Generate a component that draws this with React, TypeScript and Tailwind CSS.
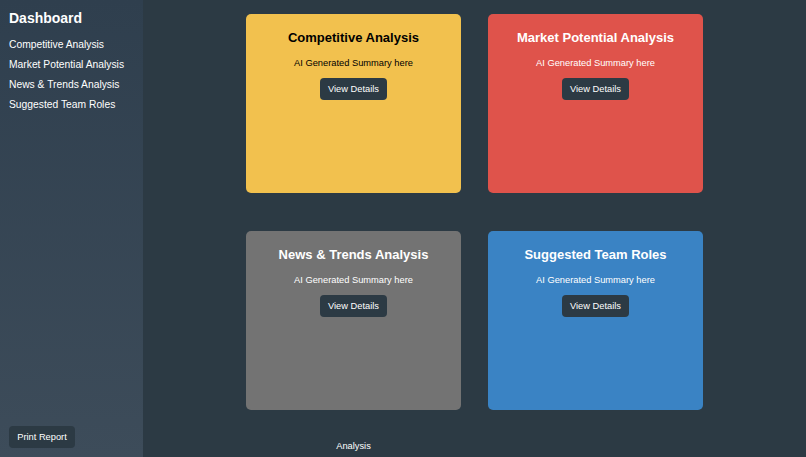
const cards = [
  { title: "Competitive Analysis", bg: "bg-[#f2c14e]", text: "text-black" },
  { title: "Market Potential Analysis", bg: "bg-[#df534b]", text: "text-white" },
  { title: "News & Trends Analysis", bg: "bg-[#737373]", text: "text-white" },
  { title: "Suggested Team Roles", bg: "bg-[#3a83c4]", text: "text-white" },
];

const links = ["Competitive Analysis", "Market Potential Analysis", "News & Trends Analysis", "Suggested Team Roles"];

export default function App() {
  return (
    <div className="flex h-[457px] w-[806px] overflow-hidden bg-[#2c3a44] font-['Liberation_Sans',Arial,sans-serif]">
      <aside className="flex w-[143px] shrink-0 flex-col justify-between bg-gradient-to-b from-[#2f3f4e] to-[#3d4c5a] px-[9px] pt-[9px] pb-[9px] text-white">
        <div>
          <h1 className="text-[14px] font-bold leading-[18px]">Dashboard</h1>
          <ul className="mt-[11px] flex flex-col gap-[6px] text-[10.3px] leading-[14px]">
            {links.map((l) => (
              <li key={l}>{l}</li>
            ))}
          </ul>
        </div>
        <button className="w-[66px] rounded-[4px] bg-[#2c3a44] py-[5px] text-[9.3px] leading-[12px] text-white">
          Print Report
        </button>
      </aside>
      <main className="flex flex-1 flex-col items-center pt-[14px]">
        <div className="grid grid-cols-[215px_215px] gap-x-[27px] gap-y-[38px]">
          {cards.map((c) => (
            <div key={c.title} className={`flex h-[179px] flex-col items-center rounded-[5px] pt-[15px] ${c.bg} ${c.text}`}>
              <h2 className="text-[13px] font-bold leading-[18px]">{c.title}</h2>
              <p className="mt-[10px] text-[9.3px] leading-[12px]">AI Generated Summary here</p>
              <button className="mt-[9px] w-[67px] rounded-[4px] bg-[#2c3a44] py-[5px] text-[9.3px] leading-[12px] text-white">
                View Details
              </button>
            </div>
          ))}
          <div className="col-start-1 -mt-[8px] text-center text-[9.3px] leading-[12px] text-white">Analysis</div>
        </div>
      </main>
    </div>
  );
}
